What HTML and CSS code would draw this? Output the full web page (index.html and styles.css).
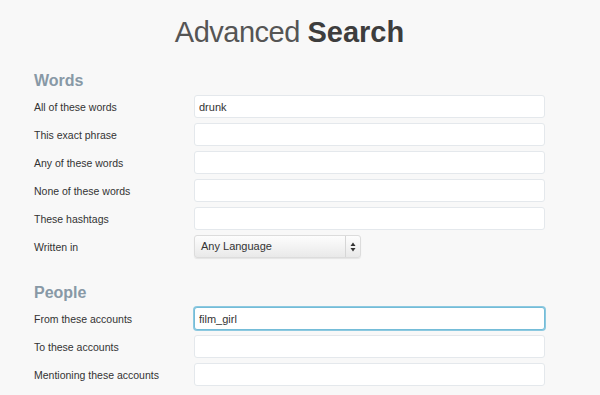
FILE: index.html
```html
<!DOCTYPE html>
<html lang="en">
<head>
    <meta charset="UTF-8">
    <meta name="viewport" content="width=device-width, initial-scale=1.0">
    <title>Advanced Search</title>
    <link rel="stylesheet" href="styles.css">
</head>
<body>

<div class="container">
    <h1>Advanced <strong>Search</strong></h1>

    <form class="search-form">
        <h2>Words</h2>
        <div class="row">
            <label for="all-words">All of these words</label>
            <input id="all-words" type="text" value="drunk">
        </div>
        <div class="row">
            <label for="exact-phrase">This exact phrase</label>
            <input id="exact-phrase" type="text">
        </div>
        <div class="row">
            <label for="any-words">Any of these words</label>
            <input id="any-words" type="text">
        </div>
        <div class="row">
            <label for="none-words">None of these words</label>
            <input id="none-words" type="text">
        </div>
        <div class="row">
            <label for="hashtags">These hashtags</label>
            <input id="hashtags" type="text">
        </div>
        <div class="row">
            <label>Written in</label>
            <div class="select">
                <span class="select-value">Any Language</span>
                <span class="select-arrows">
                    <svg width="6" height="10" viewBox="0 0 6 10">
                        <path d="M3 0.5 L5.5 4 L0.5 4 Z" fill="#333"/>
                        <path d="M3 9.5 L5.5 6 L0.5 6 Z" fill="#333"/>
                    </svg>
                </span>
            </div>
        </div>

        <h2 class="section-people">People</h2>
        <div class="row">
            <label for="from-accounts">From these accounts</label>
            <input id="from-accounts" class="focused" type="text" value="film_girl">
        </div>
        <div class="row">
            <label for="to-accounts">To these accounts</label>
            <input id="to-accounts" type="text">
        </div>
        <div class="row">
            <label for="mention-accounts">Mentioning these accounts</label>
            <input id="mention-accounts" type="text">
        </div>
    </form>
</div>

</body>
</html>
```

FILE: styles.css
```css
body {
    font-family: 'Liberation Sans', Arial, sans-serif;
    background-color: #f8f8f8;
    margin: 0;
    padding: 0;
    color: #333;
}

.container {
    width: 511px;
    margin: 0 0 0 34px;
    padding-top: 14px;
}

h1 {
    margin: 0 0 21px;
    font-size: 29px;
    line-height: 36px;
    font-weight: normal;
    color: #555;
    text-align: center;
    letter-spacing: -0.5px;
}

h1 strong {
    color: #3d3d3d;
    font-weight: bold;
    letter-spacing: 0;
}

h2 {
    margin: 0 0 4px;
    font-size: 16px;
    line-height: 20px;
    font-weight: bold;
    color: #8899a6;
}

.section-people {
    margin-top: 25px;
}

.row {
    display: grid;
    grid-template-columns: 160px 351px;
    align-items: center;
    margin-bottom: 5px;
}

label {
    font-size: 10.5px;
    color: #333;
}

input {
    box-sizing: border-box;
    height: 23px;
    padding: 0 4px;
    border: 1px solid #e4e8ec;
    border-radius: 3px;
    background-color: #fff;
    font-family: inherit;
    font-size: 11px;
    color: #333;
    outline: none;
}

input.focused {
    border-color: #74bcd8;
    box-shadow: 0 0 0 1px #8cc9e0;
}

.select {
    display: flex;
    box-sizing: border-box;
    width: 167px;
    height: 23px;
    border: 1px solid #dcdcdc;
    border-radius: 3px;
    background: linear-gradient(#fdfdfd, #e9e9e9);
    box-shadow: 0 1px 1px rgba(0, 0, 0, 0.08);
}

.select-value {
    flex: 1;
    padding-left: 6px;
    font-size: 11px;
    line-height: 21px;
}

.select-arrows {
    display: flex;
    align-items: center;
    justify-content: center;
    width: 14px;
    border-left: 1px solid #d6d6d6;
}
```
